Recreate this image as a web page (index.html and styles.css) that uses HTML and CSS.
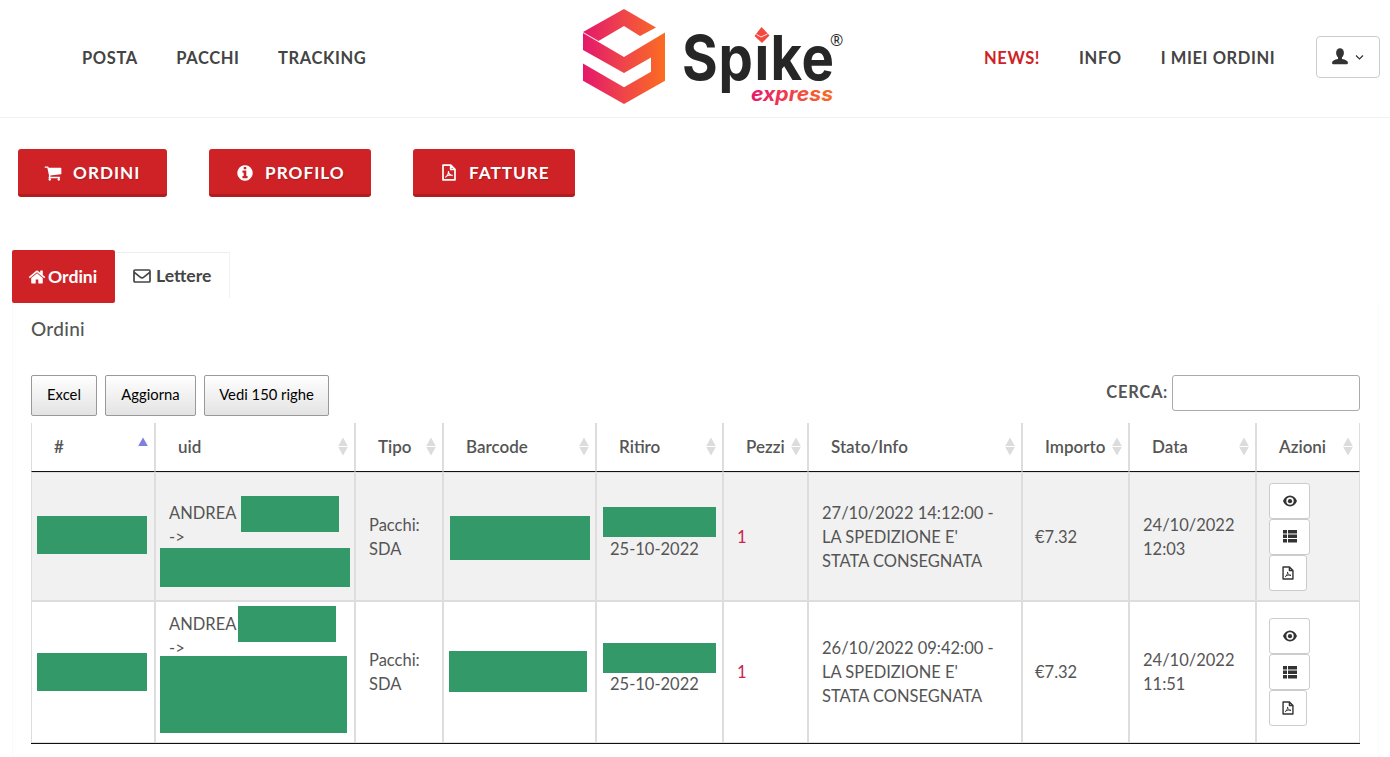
FILE: index.html
```html
<!DOCTYPE html>
<html lang="it">
<head>
  <meta charset="UTF-8" />
  <meta name="viewport" content="width=device-width, initial-scale=1.0" />
  <title>Spike express - I miei ordini</title>
  <link rel="stylesheet" href="styles.css">
</head>
<body>
  <!-- Icone -->
  <svg class="sprite" width="0" height="0">
    <symbol id="cart" viewBox="0 0 1792 1792"><path d="M704 1536q0 52-38 90t-90 38-90-38-38-90 38-90 90-38 90 38 38 90zm896 0q0 52-38 90t-90 38-90-38-38-90 38-90 90-38 90 38 38 90zm128-1088v512q0 24-16.500 42.500t-40.500 21.500l-1044 122q13 60 13 70 0 16-24 64h920q26 0 45 19t19 45-19 45-45 19h-1024q-26 0-45-19t-19-45q0-11 8-31.500t16-36 21.500-40 15.500-29.500l-177-823h-204q-26 0-45-19t-19-45 19-45 45-19h256q16 0 28.500 6.500t19.500 15.500 13 24.500 8 26 5.500 29.500 4.500 26h1201q26 0 45 19t19 45z"/></symbol>
    <symbol id="info" viewBox="0 0 1792 1792"><path d="M1152 1376v-160q0-14-9-23t-23-9h-96v-512q0-14-9-23t-23-9h-320q-14 0-23 9t-9 23v160q0 14 9 23t23 9h96v320h-96q-14 0-23 9t-9 23v160q0 14 9 23t23 9h448q14 0 23-9t9-23zm-128-896v-160q0-14-9-23t-23-9h-192q-14 0-23 9t-9 23v160q0 14 9 23t23 9h192q14 0 23-9t9-23zm640 416q0 209-103 385.500t-279.500 279.500-385.500 103-385.500-103-279.500-279.500-103-385.500 103-385.500 279.500-279.500 385.500-103 385.500 103 279.500 279.500 103 385.500z"/></symbol>
    <symbol id="home" viewBox="0 0 1792 1792"><path d="M1472 992v480q0 26-19 45t-45 19h-384v-384h-256v384h-384q-26 0-45-19t-19-45v-480q0-1 .5-3t.5-3l575-474 575 474q1 2 1 6zm223-69l-62 74q-8 9-21 11h-3q-13 0-21-7l-692-577-692 577q-12 8-24 7-13-2-21-11l-62-74q-8-10-7-23.500t11-21.500l719-599q32-26 76-26t76 26l244 204v-195q0-14 9-23t23-9h192q14 0 23 9t9 23v408l219 182q10 8 11 21.500t-7 23.500z"/></symbol>
    <symbol id="pdf" viewBox="0 0 14 17">
      <path d="M1 1.200h7.800l4.200 4.200v10.400H1zM8.700 1.500v4h4" fill="none" stroke="currentColor" stroke-width="1.700" stroke-linejoin="round"/>
      <path d="M3.300 13.400c1.700-1 3.300-3.700 3.200-6.300M6.500 7.300c0 2.200 1.600 4 4.200 4.300M4.300 12c1.700-.8 3.900-1.300 6.300-.8" fill="none" stroke="currentColor" stroke-width="1.100"/>
    </symbol>
    <symbol id="mail" viewBox="0 0 18 14"><path d="M2 1h14q1 0 1 1v10q0 1-1 1H2q-1 0-1-1V2q0-1 1-1zM1.300 3.300l5.900 4.800q1.800 1.400 3.600 0l5.900-4.800" fill="none" stroke="currentColor" stroke-width="1.700"/></symbol>
    <symbol id="user" viewBox="0 0 16 17"><ellipse cx="8" cy="5" rx="3.900" ry="4.800"/><path d="M6 9h4v2c3.600.6 6 2 6 4 0 .8-.8 1.300-2 1.300H2C.8 16.300 0 15.800 0 15c0-2 2.400-3.400 6-4z"/></symbol>
    <symbol id="eye" viewBox="0 0 14 12"><path d="M0 6C1.300 2.700 3.800.5 7 .5S12.700 2.700 14 6c-1.300 3.300-3.800 5.500-7 5.500S1.300 9.300 0 6z"/><circle cx="7" cy="6" r="3.700" fill="#fff"/><circle cx="7" cy="6.200" r="2.100"/></symbol>
    <symbol id="list" viewBox="0 0 14 13"><path d="M0 0h4v3.500H0zM5 0h9v3.500H5zM0 4.500h4V8H0zM5 4.500h9V8H5zM0 9h4v3.500H0zM5 9h9v3.500H5z"/></symbol>
    <symbol id="sort" viewBox="0 0 10 20"><path d="M5 .5L9.800 9H.2zM5 18.500L9.800 10H.2z"/></symbol>
    <symbol id="sort-asc" viewBox="0 0 10 20"><path d="M5 .5L9.800 9H.2z"/></symbol>
  </svg>

  <header class="topbar">
    <nav class="menu menu-left">
      <a>POSTA</a>
      <a>PACCHI</a>
      <a>TRACKING</a>
    </nav>
    <svg class="logo" width="264" height="100" viewBox="0 0 264 100">
      <defs>
        <linearGradient id="gradMark" gradientUnits="userSpaceOnUse" x1="0" y1="0" x2="82" y2="0">
          <stop offset="0" stop-color="#e4186c"/>
          <stop offset="0.5" stop-color="#ef4549"/>
          <stop offset="1" stop-color="#fb6c22"/>
        </linearGradient>
        <linearGradient id="gradText" gradientUnits="userSpaceOnUse" x1="168" y1="0" x2="250" y2="0">
          <stop offset="0" stop-color="#e4186c"/>
          <stop offset="1" stop-color="#fb6c22"/>
        </linearGradient>
      </defs>
      <g fill="url(#gradMark)">
        <path d="M0 23L41 0l32 18.500-16 8.500-16-10-25.500 15z"/>
        <path d="M0 24l41 24 41-24.500v48.200L41 95 0 71.700V54.500l41 23.700 27-15.500V48.500L41 64 0 41z"/>
      </g>
      <path d="M0 23.500l15.500 8.500" stroke="#f7a3b6" stroke-width=".5"/>
      <text class="brand" transform="scale(.88 1)" x="112.500 154 194.900 213 248.300" y="71">Spike</text>
      <!-- il rombo prende il posto del puntino -->
      <path d="M170 10h17v25h-17z" fill="#fff"/>
      <path d="M178.500 18l8 8.500-7.500 7.500-7.500-7z" fill="#f4483f"/>
      <path d="M173.500 25.500l4.500 2.500 6.500-3" fill="none" stroke="#fff" stroke-width=".9"/>
      <path d="M187.800 22h2v14h-2z" fill="none"/>
      <text class="reg" x="247" y="36.500">®</text>
      <text class="brand-sub" x="168" y="91.500" textLength="82" lengthAdjust="spacingAndGlyphs">express</text>
    </svg>
    <nav class="menu menu-right">
      <a class="hot">NEWS!</a>
      <a>INFO</a>
      <a>I MIEI ORDINI</a>
    </nav>
    <button class="user-btn">
      <svg width="16" height="17"><use href="#user"/></svg>
      <svg width="9" height="6" viewBox="0 0 8 6"><path d="M.5 1.500L4 5l3.500-3.500" fill="none" stroke="#333" stroke-width="1.200"/></svg>
    </button>
  </header>

  <div class="shortcuts">
    <a class="btn-red btn-ordini"><svg width="18" height="18"><use href="#cart"/></svg><span>ORDINI</span></a>
    <a class="btn-red btn-profilo"><svg width="18" height="18"><use href="#info"/></svg><span>PROFILO</span></a>
    <a class="btn-red btn-fatture"><svg width="14" height="17"><use href="#pdf"/></svg><span>FATTURE</span></a>
  </div>

  <div class="tabs">
    <a class="tab active"><svg width="18" height="18"><use href="#home"/></svg><span>Ordini</span></a>
    <a class="tab"><svg width="18" height="14"><use href="#mail"/></svg><span>Lettere</span></a>
  </div>

  <section class="panel">
    <h4>Ordini</h4>
    <div class="toolbar">
      <button class="dt-btn w-excel">Excel</button>
      <button class="dt-btn w-aggiorna">Aggiorna</button>
      <button class="dt-btn w-righe">Vedi 150 righe</button>
      <label class="search"><span>CERCA:</span><input type="text" /></label>
    </div>

    <table class="orders">
      <colgroup>
        <col class="c-num"><col class="c-uid"><col class="c-tipo"><col class="c-barcode"><col class="c-ritiro">
        <col class="c-pezzi"><col class="c-stato"><col class="c-importo"><col class="c-data"><col class="c-azioni">
      </colgroup>
      <thead>
        <tr>
          <th><div class="head sorted">#<svg width="10" height="20"><use href="#sort-asc"/></svg></div></th>
          <th><div class="head">uid<svg width="10" height="20"><use href="#sort"/></svg></div></th>
          <th><div class="head">Tipo<svg width="10" height="20"><use href="#sort"/></svg></div></th>
          <th><div class="head">Barcode<svg width="10" height="20"><use href="#sort"/></svg></div></th>
          <th><div class="head">Ritiro<svg width="10" height="20"><use href="#sort"/></svg></div></th>
          <th><div class="head">Pezzi<svg width="10" height="20"><use href="#sort"/></svg></div></th>
          <th><div class="head">Stato/Info<svg width="10" height="20"><use href="#sort"/></svg></div></th>
          <th><div class="head">Importo<svg width="10" height="20"><use href="#sort"/></svg></div></th>
          <th><div class="head">Data<svg width="10" height="20"><use href="#sort"/></svg></div></th>
          <th><div class="head">Azioni<svg width="10" height="20"><use href="#sort"/></svg></div></th>
        </tr>
      </thead>
      <tbody>
        <tr class="row-a">
          <td><i class="mask mask-num"></i></td>
          <td><div class="names">ANDREA<br>-&gt;</div><i class="mask mask-name"></i><i class="mask mask-dest"></i></td>
          <td>Pacchi:<br>SDA</td>
          <td><i class="mask mask-code"></i></td>
          <td><div class="pickup">25-10-2022</div><i class="mask mask-pickup"></i></td>
          <td class="qty">1</td>
          <td>27/10/2022 14:12:00 -<br>LA SPEDIZIONE E'<br>STATA CONSEGNATA</td>
          <td class="amount">€7.32</td>
          <td>24/10/2022<br>12:03</td>
          <td class="cell-actions">
            <div class="actions">
              <button><svg width="14" height="12"><use href="#eye"/></svg></button>
              <button><svg width="14" height="13"><use href="#list"/></svg></button>
              <button class="narrow"><svg width="12" height="14"><use href="#pdf"/></svg></button>
            </div>
          </td>
        </tr>
        <tr class="row-b">
          <td><i class="mask mask-num"></i></td>
          <td><div class="names">ANDREA<br>-&gt;</div><i class="mask mask-name"></i><i class="mask mask-dest"></i></td>
          <td>Pacchi:<br>SDA</td>
          <td><i class="mask mask-code"></i></td>
          <td><div class="pickup">25-10-2022</div><i class="mask mask-pickup"></i></td>
          <td class="qty">1</td>
          <td>26/10/2022 09:42:00 -<br>LA SPEDIZIONE E'<br>STATA CONSEGNATA</td>
          <td class="amount">€7.32</td>
          <td>24/10/2022<br>11:51</td>
          <td class="cell-actions">
            <div class="actions">
              <button><svg width="14" height="12"><use href="#eye"/></svg></button>
              <button><svg width="14" height="13"><use href="#list"/></svg></button>
              <button class="narrow"><svg width="12" height="14"><use href="#pdf"/></svg></button>
            </div>
          </td>
        </tr>
      </tbody>
    </table>
  </section>
</body>
</html>
```
FILE: styles.css
```css
* {
  box-sizing: border-box;
}
body {
  margin: 0;
  font-family: Lato, "Liberation Sans", sans-serif;
  font-size: 16.5px;
  line-height: 24px;
  background: #fff;
  color: #555;
  height: 757px;
  overflow: hidden;
}
svg {
  display: block;
  flex: none;
  fill: currentColor;
}
.sprite {
  position: absolute;
}
button {
  font-family: inherit;
}

/* Barra in alto */
.topbar {
  display: flex;
  align-items: center;
  height: 118px;
  padding: 0 10px 4px 82px;
  border-bottom: 1px solid #f2f2f2;
}
.menu {
  display: flex;
  padding-top: 2px;
  font-size: 16.5px;
  font-weight: 700;
  letter-spacing: 0.6px;
  color: #444;
  white-space: nowrap;
}
.menu-left {
  width: 501px;
  gap: 38.5px;
}
.menu-right {
  margin-left: 137px;
  width: 332px;
  gap: 39px;
}
.hot {
  color: #cf2227;
}
.logo {
  margin-top: 5px;
  overflow: visible;
}
.brand {
  font-family: Inter, sans-serif;
  font-size: 62px;
  font-weight: 700;
  fill: #262626;
}
.brand-sub {
  font-family: Inter, sans-serif;
  font-size: 20px;
  font-weight: 700;
  font-style: italic;
  fill: url(#gradText);
}
.reg {
  font-family: "Open Sans", sans-serif;
  font-size: 16px;
  fill: #262626;
}
.user-btn {
  display: flex;
  align-items: center;
  justify-content: center;
  gap: 7px;
  margin-left: auto;
  width: 64px;
  height: 42px;
  border: 1px solid #ccc;
  border-radius: 4px;
  background: #fff;
  color: #333;
}

/* Pulsanti rossi */
.shortcuts {
  display: flex;
  gap: 42px;
  padding: 31px 18px 0;
}
.btn-red {
  display: flex;
  align-items: center;
  height: 48px;
  padding: 2px 0 0 27px;
  gap: 11px;
  border-radius: 3px;
  border-bottom: 3px solid #b01d21;
  background: #cf2227;
  color: #fff;
  font-size: 17.2px;
  font-weight: 700;
  letter-spacing: 1px;
  text-shadow: 1px 1px 1px rgba(0,0,0,0.2);
}
.btn-ordini {
  width: 149px;
  padding-left: 26px;
}
.btn-profilo {
  width: 162px;
}
.btn-fatture {
  width: 162px;
  padding-left: 29px;
  gap: 13px;
}

/* Schede */
.tabs {
  display: flex;
  align-items: flex-start;
  padding: 53px 12px 0;
}
.tab {
  display: flex;
  align-items: center;
  gap: 5px;
  width: 115px;
  height: 46px;
  margin-top: 2px;
  padding-left: 18px;
  border-top: 1px solid #eee;
  border-right: 1px solid #f2f2f2;
  color: #444;
  font-size: 17.6px;
  font-weight: 700;
}
.tab.active {
  width: 103px;
  height: 53px;
  margin-top: 0;
  padding-left: 16px;
  gap: 2px;
  border: 0;
  border-radius: 2px;
  background: #cf2227;
  color: #fff;
}

.panel {
  margin: 0 11px 0 12px;
  padding: 14px 18px 0;
  height: 460px;
  border-left: 1px solid #fafafa;
  border-right: 1px solid #fafafa;
}
.panel h4 {
  margin: 0 0 34px;
  font-size: 19px;
  font-weight: 500;
  letter-spacing: 0.3px;
  line-height: 24px;
}
.toolbar {
  display: flex;
  align-items: flex-start;
  gap: 8px;
  height: 48px;
}
.dt-btn {
  height: 41px;
  padding: 0 0 4px;
  border: 1px solid #999;
  border-radius: 2px;
  background: linear-gradient(#fff, #e3e3e3);
  font-size: 14.8px;
  color: #000;
  white-space: nowrap;
}
.w-excel {
  width: 66px;
}
.w-aggiorna {
  width: 91px;
}
.w-righe {
  width: 125px;
}
.search {
  display: flex;
  gap: 4px;
  margin-left: auto;
  font-size: 16.5px;
  font-weight: 700;
  letter-spacing: 0.7px;
  line-height: 34px;
}
.search input {
  width: 188px;
  height: 36px;
  border: 1px solid #aaa;
  border-radius: 3px;
}

/* Tabella ordini */
.orders {
  width: 1329px;
  table-layout: fixed;
  border-collapse: separate;
  border-spacing: 0;
  border-bottom: 1px solid #111;
}
.c-num { width: 124px; }
.c-uid { width: 200px; }
.c-tipo { width: 88px; }
.c-barcode { width: 153px; }
.c-ritiro { width: 127px; }
.c-pezzi { width: 85px; }
.c-stato { width: 214px; }
.c-importo { width: 107px; }
.c-data { width: 127px; }
.c-azioni { width: 104px; }
.orders th {
  height: 49px;
  padding: 0 6px 0 22px;
  border: 1px solid #ddd;
  border-top: 0;
  border-bottom-color: #111;
  font-size: 17px;
  font-weight: 600;
  text-align: left;
}
.head {
  display: flex;
  align-items: center;
  justify-content: space-between;
  white-space: nowrap;
}
.head svg {
  color: #dcdcdc;
}
.head.sorted svg {
  color: #7f7fe0;
}
.orders td {
  position: relative;
  padding: 0 0 0 13px;
  border: 1px solid #ddd;
  vertical-align: middle;
  white-space: nowrap;
}
.row-a td {
  height: 129px;
  background: #f1f1f1;
}
.row-b td {
  height: 142px;
}
.names {
  height: 72px;
}
.row-b .names {
  height: 120px;
}
.pickup {
  padding-top: 24px;
}
.orders td.qty {
  color: #c7254e;
}
.orders td.amount,
.orders td.cell-actions {
  padding-left: 12px;
}
.actions {
  display: flex;
  flex-direction: column;
}
.actions button {
  display: flex;
  align-items: center;
  justify-content: center;
  width: 41px;
  height: 36px;
  padding: 0;
  border: 1px solid #ccc;
  border-radius: 3px;
  background: #fff;
  color: #333;
}
.actions .narrow {
  width: 38px;
}

/* Dati oscurati */
.mask {
  position: absolute;
  background: #349968;
}
.mask-num { left: 5px; top: 43px; width: 110px; height: 38px; }
.mask-name { left: 85px; top: 23px; width: 98px; height: 36px; }
.mask-dest { left: 4px; top: 75px; width: 190px; height: 39px; }
.mask-code { left: 6px; top: 43px; width: 140px; height: 44px; }
.mask-pickup { left: 6px; top: 34px; width: 113px; height: 30px; }
.row-b .mask-num { top: 51px; }
.row-b .mask-name { left: 82px; top: 4px; }
.row-b .mask-dest { top: 54px; width: 187px; height: 77px; }
.row-b .mask-code { left: 5px; top: 49px; width: 138px; height: 41px; }
.row-b .mask-pickup { top: 41px; }
```
